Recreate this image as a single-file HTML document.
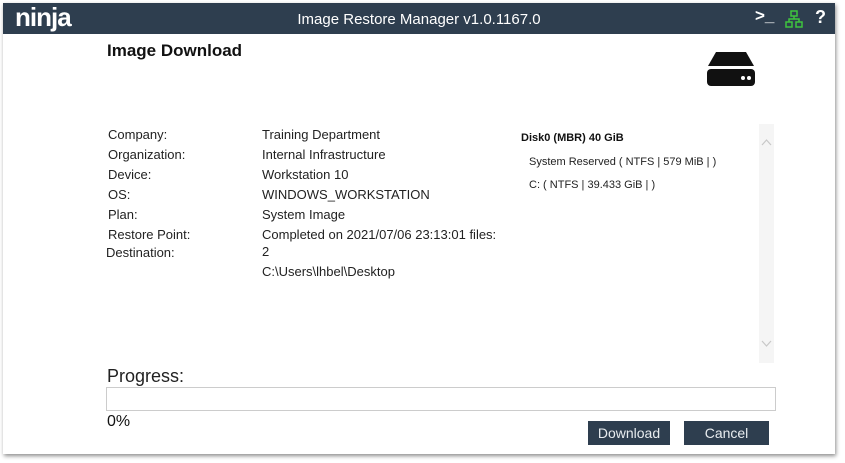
<!DOCTYPE html>
<html><head><style>
body{margin:0;width:845px;height:463px;background:#fff;position:relative;overflow:hidden;font-family:"Liberation Sans",sans-serif;}
.win{position:absolute;left:3px;top:3px;width:832px;height:451px;background:#fff;box-shadow:1px 2px 4px rgba(0,0,0,.45);}
.hdr{position:absolute;left:0;top:0;width:832px;height:31px;background:#2e3e4f;}
.t{position:absolute;color:#222;font-size:13px;white-space:nowrap;}
.btn{position:absolute;background:#2e3e4f;color:#e8ecef;font-size:14px;text-align:center;line-height:24px;height:24px;}
</style></head><body>
<div class="win">
<div class="hdr">
 <div style="position:absolute;left:12px;top:-1px;color:#fff;font-size:26px;font-weight:bold;letter-spacing:-1px;">ninja</div>
 <div style="position:absolute;left:0;width:832px;top:8px;text-align:center;color:#fff;font-size:15px;">Image Restore Manager v1.0.1167.0</div>
 <div style="position:absolute;left:752px;top:3px;color:#fff;font-size:17px;font-weight:bold;">&gt;_</div>
 <svg style="position:absolute;left:782px;top:7px" width="18" height="18" viewBox="0 0 18 18" fill="none" stroke="#3ec43e" stroke-width="1.5"><rect x="6" y="1" width="6" height="5"/><rect x="1" y="12" width="6" height="5"/><rect x="11" y="12" width="6" height="5"/><path d="M9 6v3M4 12V9h10v3"/></svg>
 <div style="position:absolute;left:812px;top:4px;color:#fff;font-size:18px;font-weight:bold;">?</div>
</div>
</div>
<div class="t" style="left:107px;top:41px;font-size:17px;font-weight:bold;color:#111;">Image Download</div>
<svg style="position:absolute;left:707px;top:52px" width="48" height="34" viewBox="0 0 48 34"><path d="M9 0h30l8 14H1z" fill="#111"/><rect x="0" y="17" width="48" height="17" rx="4" fill="#111"/><circle cx="36" cy="26" r="2" fill="#fff"/><circle cx="42" cy="26" r="2" fill="#fff"/></svg>
<div class="t" style="left:108px;top:127px">Company:</div><div class="t" style="left:262px;top:127px">Training Department</div>
<div class="t" style="left:108px;top:147px">Organization:</div><div class="t" style="left:262px;top:147px">Internal Infrastructure</div>
<div class="t" style="left:108px;top:167px">Device:</div><div class="t" style="left:262px;top:167px">Workstation 10</div>
<div class="t" style="left:108px;top:187px">OS:</div><div class="t" style="left:262px;top:187px">WINDOWS_WORKSTATION</div>
<div class="t" style="left:108px;top:207px">Plan:</div><div class="t" style="left:262px;top:207px">System Image</div>
<div class="t" style="left:108px;top:227px">Restore Point:</div><div class="t" style="left:262px;top:227px">Completed on 2021/07/06 23:13:01 files:</div>
<div class="t" style="left:106px;top:245px">Destination:</div><div class="t" style="left:262px;top:244px">2</div>
<div class="t" style="left:262px;top:264px">C:\Users\lhbel\Desktop</div>
<div class="t" style="left:521px;top:132px;font-size:11px;font-weight:bold;color:#111">Disk0 (MBR) 40 GiB</div>
<div class="t" style="left:529px;top:156px;font-size:11px">System Reserved ( NTFS | 579 MiB | )</div>
<div class="t" style="left:529px;top:179px;font-size:11px">C: ( NTFS | 39.433 GiB | )</div>
<div style="position:absolute;left:759px;top:124px;width:15px;height:239px;background:#f5f5f5"></div>
<svg style="position:absolute;left:761px;top:139px" width="11" height="7" viewBox="0 0 11 7" fill="none" stroke="#c8c8c8" stroke-width="1.2"><path d="M1 6l4.5-5 4.5 5"/></svg>
<svg style="position:absolute;left:761px;top:340px" width="11" height="7" viewBox="0 0 11 7" fill="none" stroke="#c8c8c8" stroke-width="1.2"><path d="M1 1l4.5 5 4.5-5"/></svg>
<div class="t" style="left:107px;top:366px;font-size:18px;color:#222">Progress:</div>
<div style="position:absolute;left:106px;top:387px;width:668px;height:22px;border:1px solid #ccc"></div>
<div class="t" style="left:107px;top:413px;font-size:16px;color:#111">0%</div>
<div class="btn" style="left:588px;top:421px;width:82px">Download</div>
<div class="btn" style="left:684px;top:421px;width:85px">Cancel</div>
</body></html>
